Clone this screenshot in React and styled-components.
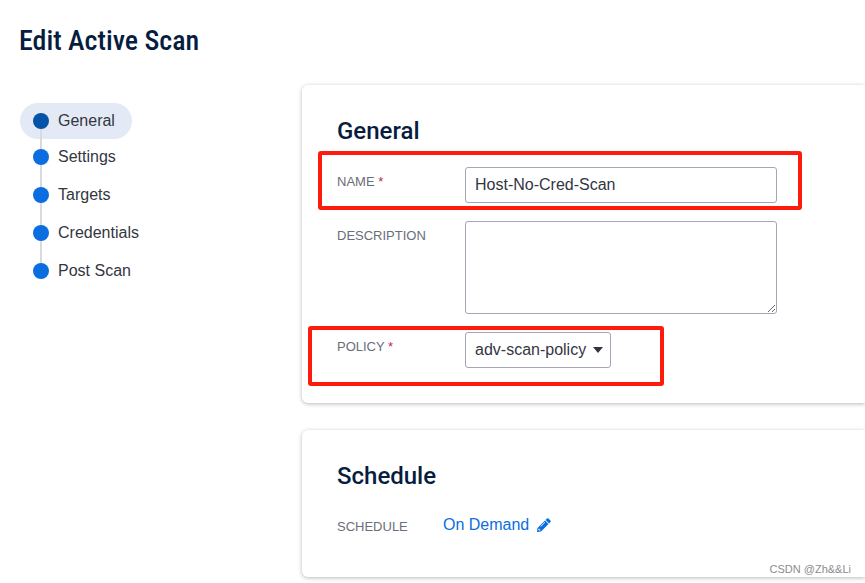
import React, {useState} from 'react'
import styled, {createGlobalStyle, css} from 'styled-components'

const FONT_BODY = '"Liberation Sans", Arial, sans-serif'
const FONT_HEADING = 'Roboto, "Liberation Sans", sans-serif'
const FONT_TITLE = '"Roboto Condensed", Roboto, sans-serif'

const COLOR_HEADING = '#071d3f'
const COLOR_TEXT = '#33363f'
const COLOR_LABEL = '#696e7a'
const COLOR_LINK = '#0b6ee0'
const COLOR_LINK_DARK = '#0553a6'
const COLOR_BORDER = '#a3a7b5'
const COLOR_REQUIRED = '#c4283c'
const COLOR_MARK = '#fe1b0c'

const GlobalStyle = createGlobalStyle`
  * {
    box-sizing: border-box;
  }

  body {
    margin: 0;
    background: #fff;
    color: ${COLOR_TEXT};
    font: 16px/20px ${FONT_BODY};
  }
`

const Page = styled.div`
  position: relative;
  min-height: 100vh;
  padding: 20px 0 5px 19px;
  overflow: hidden;
`

const PageTitle = styled.h1`
  margin: 0 0 23px;
  color: ${COLOR_HEADING};
  font: 500 28px/42px ${FONT_TITLE};
`

const Columns = styled.div`
  display: grid;
  grid-template-columns: 256px minmax(0, 1fr);
  column-gap: 26px;
  padding-left: 1px;
`

const Steps = styled.ul`
  position: relative;
  display: flex;
  flex-direction: column;
  align-items: flex-start;
  align-self: start;
  margin: 18px 0 0;
  padding: 0;
  list-style: none;

  &::before {
    content: '';
    position: absolute;
    top: 18px;
    bottom: 18px;
    left: 20px;
    width: 2px;
    background: #d9dade;
  }
`

const StepLink = styled.a`
  display: flex;
  align-items: center;
  gap: 9px;
  height: 38px;
  padding: 0 17px 0 13px;
  color: inherit;
  text-decoration: none;

  &::before {
    content: '';
    z-index: 1;
    width: 16px;
    height: 16px;
    border-radius: 50%;
    background: ${({$active}) => $active ? COLOR_LINK_DARK : COLOR_LINK};
  }

  ${({$active}) => $active && css`
    height: 36px;
    margin-bottom: -1px;
    border-radius: 18px;
    background: #e3eaf5;
  `}
`

const Cards = styled.main`
  display: flex;
  flex-direction: column;
  gap: 27px;
`

const Card = styled.section`
  padding: 32px 36px 35px 35px;
  border-radius: 6px 0 0 6px;
  background: #fff;
  box-shadow: 0 1px 4px rgba(0, 0, 0, 0.28);
`

const CardTitle = styled.h2`
  margin: 0 0 22px;
  color: ${COLOR_HEADING};
  font: 500 24px/28px ${FONT_HEADING};
`

const Fields = styled.div`
  display: flex;
  flex-direction: column;
  gap: 18px;
`

const Row = styled.div`
  position: relative;
  display: grid;
  grid-template-columns: ${({$labelWidth}) => $labelWidth || '128px'} minmax(0, 1fr);
  align-items: start;
`

const Label = styled.label`
  padding-top: 7px;
  color: ${COLOR_LABEL};
  font-size: 13px;
  line-height: 16px;
  text-transform: uppercase;
`

const Required = styled.span`
  color: ${COLOR_REQUIRED};
`

const control = css`
  display: block;
  border: 1px solid ${COLOR_BORDER};
  border-radius: 3px;
  background: #fff;
  color: ${COLOR_TEXT};
  font: 16px/20px ${FONT_BODY};
`

const TextInput = styled.input`
  ${control}
  width: 100%;
  max-width: 312px;
  height: 36px;
  padding: 0 9px;
`

const TextArea = styled.textarea`
  ${control}
  width: 100%;
  max-width: 312px;
  height: 93px;
  padding: 8px 9px;
`

const SelectBox = styled.div`
  position: relative;
  justify-self: start;
`

const Select = styled.select`
  ${control}
  height: 36px;
  padding: 0 23px 0 9px;
  appearance: none;
`

const Caret = styled.svg`
  position: absolute;
  top: 15px;
  right: 8px;
  width: 10px;
  height: 6px;
  fill: ${COLOR_TEXT};
  pointer-events: none;
`

const Highlight = styled.span`
  position: absolute;
  border: 4px solid ${COLOR_MARK};
  border-radius: 3px;
  pointer-events: none;
`

const NameHighlight = styled(Highlight)`
  top: -16px;
  bottom: -7px;
  left: -19px;
  width: 484px;
`

const PolicyHighlight = styled(Highlight)`
  top: -6px;
  bottom: -18px;
  left: -29px;
  width: 356px;
`

const EditButton = styled.button`
  display: flex;
  align-items: center;
  justify-self: start;
  gap: 8px;
  height: 30px;
  padding: 0 0 4px;
  border: 0 none;
  background: none;
  color: ${COLOR_LINK};
  font: 16px/20px ${FONT_BODY};
`

const PencilIcon = styled.svg`
  width: 14px;
  height: 14px;
  fill: currentColor;
`

const Watermark = styled.span`
  position: absolute;
  right: 14px;
  bottom: 6px;
  color: #8b8b8f;
  font-size: 11px;
  line-height: 16px;
`

const STEPS = ['General', 'Settings', 'Targets', 'Credentials', 'Post Scan']

const App = () => {
    const [name, setName] = useState('Host-No-Cred-Scan')
    const [description, setDescription] = useState('')

    return (
        <Page>
            <GlobalStyle/>
            <PageTitle>Edit Active Scan</PageTitle>
            <Columns>
                <nav>
                    <Steps>
                        {STEPS.map((step, i) => (
                            <li key={step}>
                                <StepLink href="#" $active={i === 0}>{step}</StepLink>
                            </li>
                        ))}
                    </Steps>
                </nav>
                <Cards>
                    <Card>
                        <CardTitle>General</CardTitle>
                        <Fields>
                            <Row>
                                <Label htmlFor="name">Name <Required>*</Required></Label>
                                <TextInput id="name" value={name} onChange={e => setName(e.target.value)}/>
                                <NameHighlight/>
                            </Row>
                            <Row>
                                <Label htmlFor="description">Description</Label>
                                <TextArea
                                    id="description"
                                    value={description}
                                    onChange={e => setDescription(e.target.value)}
                                />
                            </Row>
                            <Row>
                                <Label htmlFor="policy">Policy <Required>*</Required></Label>
                                <SelectBox>
                                    <Select id="policy">
                                        <option>adv-scan-policy</option>
                                    </Select>
                                    <Caret viewBox="0 0 10 6"><path d="M0 0h10L5 6z"/></Caret>
                                </SelectBox>
                                <PolicyHighlight/>
                            </Row>
                        </Fields>
                    </Card>
                    <Card>
                        <CardTitle>Schedule</CardTitle>
                        <Row $labelWidth="106px">
                            <Label htmlFor="schedule">Schedule</Label>
                            <EditButton id="schedule" type="button">
                                On Demand
                                <PencilIcon viewBox="0 0 14 14">
                                    <path
                                        fillRule="evenodd"
                                        d="M9.9.6Q10.7-.2 11.5.6L13.4 2.5Q14.2 3.3 13.4 4.1L12.1 5.4 8.6 1.9ZM8 2.5L11.5 6 4 13.5 0 14 .5 10ZM1.6 10.7L1.4 12 2 12.6 3.3 12.4V11.4H2.4V10.6ZM7.7 4.1L3.5 8.3 3.9 8.7 8.1 4.5Z"
                                    />
                                </PencilIcon>
                            </EditButton>
                        </Row>
                    </Card>
                </Cards>
            </Columns>
            <Watermark>CSDN @Zh&amp;&amp;Li</Watermark>
        </Page>
    )
}

export default App
